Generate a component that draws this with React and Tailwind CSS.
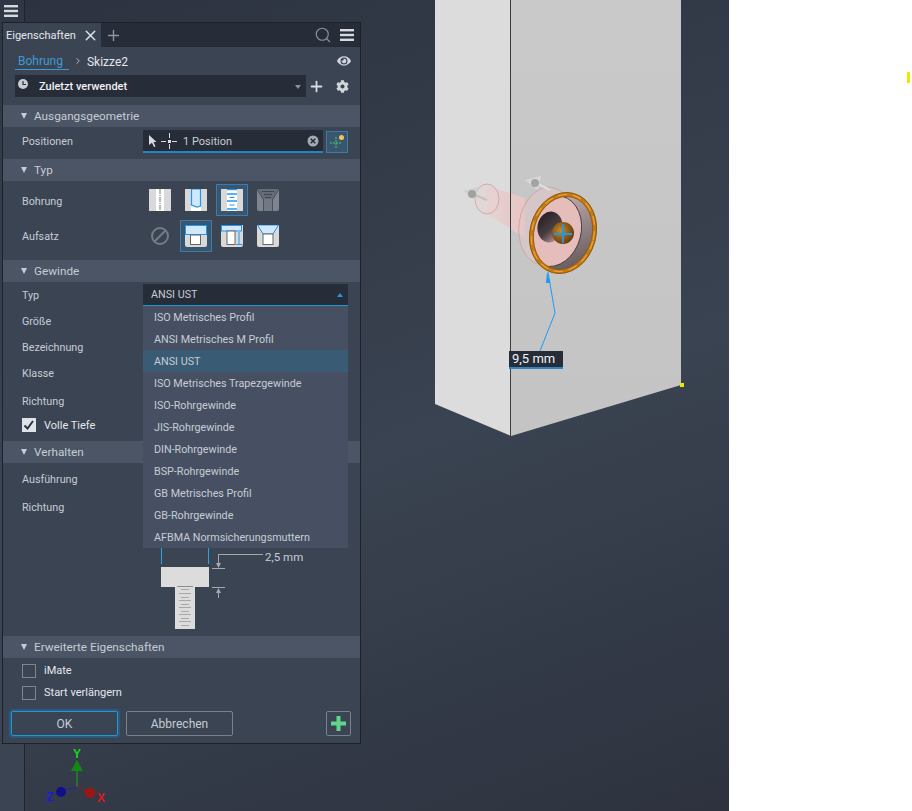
import React from 'react';
import { ChevronRight, Plus, Search, X } from 'lucide-react';
import { FaCog, FaEye } from 'react-icons/fa';

const threads = [
  'ISO Metrisches Profil',
  'ANSI Metrisches M Profil',
  'ANSI UST',
  'ISO Metrisches Trapezgewinde',
  'ISO-Rohrgewinde',
  'JIS-Rohrgewinde',
  'DIN-Rohrgewinde',
  'BSP-Rohrgewinde',
  'GB Metrisches Profil',
  'GB-Rohrgewinde',
  'AFBMA Normsicherungsmuttern',
];

const Hamburger = ({ className }) => (
  <svg viewBox="0 0 14 12" className={className} fill="currentColor">
    <rect x="0" y="0" width="14" height="2.4" />
    <rect x="0" y="4.8" width="14" height="2.4" />
    <rect x="0" y="9.6" width="14" height="2.4" />
  </svg>
);

const SectionHeader = ({ title }) => (
  <div className="h-[22px] shrink-0 bg-[#4b5565] flex items-center pl-[18px] text-[11.75px] text-[#c6ccd5]">
    <span className="w-0 h-0 mr-[7px] border-x-[3.5px] border-x-transparent border-t-[6px] border-t-[#c6ccd5]" />
    <span className="pt-[2px]">{title}</span>
  </div>
);

const Row = ({ label, className, children }) => (
  <div className={`flex items-center shrink-0 pl-[19px] ${className}`}>
    <span className="w-[121px] pt-[2px] text-[#c6ccd5]">{label}</span>
    {children}
  </div>
);

const CheckRow = ({ label, checked, className }) => (
  <div className={`flex items-center shrink-0 pl-[19px] gap-[8px] text-[11px] text-[#e4e7ec] ${className}`}>
    {checked ? (
      <span className="w-[14px] h-[14px] bg-[#dfe3e8] flex items-center justify-center">
        <svg viewBox="0 0 14 14" className="w-[14px] h-[14px]" fill="none" stroke="#2b323e" strokeWidth="2">
          <path d="M2.5 7.5 L5.5 10.5 L11 3" />
        </svg>
      </span>
    ) : (
      <span className="w-[14px] h-[14px] border border-[#7d8693]" />
    )}
    <span className="pt-[2px]">{label}</span>
  </div>
);

const Tile = ({ active, children }) => (
  <div className={`w-[32px] h-[32px] flex items-center justify-center border ${active ? 'bg-[#39566f] border-[#3d7ba5]' : 'border-transparent'}`}>
    <svg viewBox="0 0 22 22" className="w-[22px] h-[22px]">{children}</svg>
  </div>
);

const Sides = ({ width = 6 }) => (
  <>
    <rect x="0" y="0" width="22" height="22" fill="#fff" />
    <rect x="0" y="0" width={width} height="22" fill="#d9d9d9" />
    <rect x={22 - width} y="0" width={width} height="22" fill="#d9d9d9" />
  </>
);

const Block = () => (
  <path d="M0 0 H22 V20 Q22 22 20 22 H2 Q0 22 0 20 Z" fill="#d9d9d9" />
);

const HoleIcons = () => (
  <div className="flex items-center ml-[1px] gap-[4px] -mt-[2px]">
    <Tile>
      <Sides width={7} />
      <path d="M11 0 V22" stroke="#777" strokeWidth="1" strokeDasharray="5 1 1 1" />
    </Tile>
    <Tile>
      <Sides />
      <path d="M6.5 0 V16 L12 18 L15.5 17 V0 Z" fill="#cfe8fb" stroke="#2396ee" strokeWidth="1.2" />
    </Tile>
    <Tile active>
      <Sides />
      <path d="M6 0.7 H16 M6 5 H16 M6 12 H16 M6 20 H16" stroke="#2396ee" strokeWidth="1.3" />
      <path d="M8.5 8.5 H13.5 M8.5 16 H13.5" stroke="#2396ee" strokeWidth="1.2" />
    </Tile>
    <Tile>
      <path d="M0 0 H22 V20 Q22 22 20 22 H2 Q0 22 0 20 Z" fill="#7f858f" />
      <path d="M0 0 H22 L16 10 V22 H6 V10 Z" fill="#656c78" />
      <rect x="7" y="10" width="8" height="12" fill="#727984" />
      <path d="M6.5 10 V22 M15.5 10 V22" stroke="#4a515d" strokeWidth="1" />
      <path d="M0 0 L6 10 M22 0 L16 10" stroke="#4a515d" strokeWidth="1" />
      <path d="M5 2.5 H17 M7 5.5 H15 M8 8.5 H14" stroke="#3f4652" strokeWidth="1" />
    </Tile>
  </div>
);

const SeatIcons = () => (
  <div className="flex items-center ml-[1px] gap-[4px]">
    <div className="w-[32px] h-[32px] flex items-center justify-center">
      <svg viewBox="0 0 20 20" className="w-[20px] h-[20px]" fill="none" stroke="#767c86" strokeWidth="2">
        <circle cx="10" cy="10" r="8" />
        <path d="M4.5 15.5 L15.5 4.5" />
      </svg>
    </div>
    <Tile active>
      <Block />
      <rect x="0.5" y="0.5" width="21" height="9" fill="#cfe8fb" stroke="#2396ee" strokeWidth="1" />
      <rect x="5.5" y="10" width="10" height="9.5" fill="#fff" stroke="#666" strokeWidth="1" />
    </Tile>
    <Tile>
      <Block />
      <rect x="0.5" y="0.5" width="20" height="5.5" fill="#cfe8fb" stroke="#2396ee" strokeWidth="1" />
      <rect x="6" y="6" width="8" height="13.5" fill="#fff" stroke="#666" strokeWidth="1" />
      <path d="M18 7 V19.5 M15 19.5 H21.5" stroke="#2396ee" strokeWidth="1" />
    </Tile>
    <Tile>
      <Block />
      <path d="M0.5 0 L6 9 H16 L21.5 0 Z" fill="#cfe8fb" stroke="#2396ee" strokeWidth="1" />
      <rect x="6" y="9" width="10" height="10.5" fill="#fff" stroke="#666" strokeWidth="1" />
    </Tile>
  </div>
);

const BoltDiagram = () => (
  <svg viewBox="0 0 110 90" className="w-[110px] h-[90px] shrink-0">
    <path d="M6.5 0 V16 M53.5 0 V16" stroke="#29a3e0" strokeWidth="1" />
    <rect x="6" y="19" width="48" height="20" fill="#dcdcdc" />
    <rect x="20" y="38" width="20" height="43" fill="#dcdcdc" />
    <path d="M22 38.5 H38" stroke="#8f8f8f" strokeWidth="1" />
    <path d="M26 41.5 H34 M24 45.5 H36 M26 49.5 H34 M24 52.5 H36 M26 56.5 H34 M24 59.5 H36 M26 63.5 H34 M24 66.5 H36 M26 70.5 H34 M24 73.5 H36 M26 77.5 H34" stroke="#a8a8a8" strokeWidth="1" />
    <path d="M57 20.5 H70 M57 39.5 H70" stroke="#a0a8b4" strokeWidth="1" />
    <path d="M63.5 6 V17 M63.5 6.5 H108 M63.5 43 V50" stroke="#a0a8b4" strokeWidth="1" fill="none" />
    <path d="M61 15 H66 L63.5 20 Z M61 45 H66 L63.5 40 Z" fill="#a0a8b4" />
  </svg>
);

const Panel = () => (
  <div className="absolute left-[2px] top-[22px] w-[359px] h-[722px] border border-[#1c212a] bg-[#3b4453] flex flex-col text-[10.75px]">
    <div className="h-[24px] shrink-0 bg-[#262d38] flex items-center">
      <div className="h-full w-[98px] bg-[#3b4453] flex items-center pl-[3px] text-[11px] text-[#e4e7ec]">
        <span className="pt-[2px]">Eigenschaften</span>
        <X className="w-[17px] h-[17px] ml-[6px] text-[#e0e3e8]" strokeWidth={2} />
      </div>
      <Plus className="w-[17px] h-[17px] ml-[4px] text-[#8f96a1]" strokeWidth={2} />
      <Search className="w-[18px] h-[18px] ml-auto mr-[8px] text-[#8b919b]" strokeWidth={1.5} />
      <Hamburger className="w-[14px] h-[12px] mr-[6px] text-[#d6dae0]" />
    </div>

    <div className="h-[28px] shrink-0 flex items-center pl-[12px] pr-[9px]">
      <span className="pl-[3px] pr-[6px] pt-[1px] text-[12px] text-[#3f9ad3] border-b border-[#3f9ad3] leading-[15px]">Bohrung</span>
      <ChevronRight className="w-[10px] h-[10px] ml-[4px] text-[#c6ccd5]" strokeWidth={2} />
      <span className="ml-[4px] pt-[2px] text-[12px] text-[#e4e7ec]">Skizze2</span>
      <FaEye className="w-[14px] h-[14px] ml-auto text-[#d2d6dc]" />
    </div>

    <div className="h-[22px] shrink-0 flex items-center pl-[12px] pr-[11px]">
      <div className="relative w-[291px] h-full bg-[#262d38] flex items-center pl-[24px] text-[11px] text-[#f0f2f5] font-medium">
        <svg viewBox="0 0 10 10" className="absolute left-[3px] top-[4px] w-[10px] h-[10px]">
          <circle cx="5" cy="5" r="5" fill="#c9cdd3" />
          <path d="M5 2 V5.5 H8" stroke="#262d38" strokeWidth="1.2" fill="none" />
        </svg>
        <span className="pt-[2px]">Zuletzt verwendet</span>
        <span className="absolute right-[5px] top-[10px] w-0 h-0 border-x-[3px] border-x-transparent border-t-[4px] border-t-[#8d939d]" />
      </div>
      <Plus className="w-[17px] h-[17px] ml-[2px] text-[#d8dce2]" strokeWidth={2.5} />
      <FaCog className="w-[13px] h-[13px] ml-auto text-[#d2d6dc]" />
    </div>

    <div className="h-[8px] shrink-0" />
    <SectionHeader title="Ausgangsgeometrie" />
    <Row label="Positionen" className="h-[32px] pb-[4px]">
      <div className="w-[180px] h-[23px] mt-[1px] bg-[#262d38] border-b-2 border-[#1f86c4] flex items-center pl-[6px] text-[11px] text-[#c6ccd5]">
        <svg viewBox="0 0 8 12" className="w-[8px] h-[12px]" fill="#d8dce2">
          <path d="M0 0 L7.5 7 H4.5 L6.5 11.5 L5 12 L3 7.8 L0 10 Z" />
        </svg>
        <svg viewBox="0 0 16 16" className="w-[16px] h-[16px] ml-[4px]" fill="none" stroke="#d8dce2" strokeWidth="1">
          <path d="M0 8.5 H5 M11 8.5 H16 M8.5 0 V5 M8.5 11 V16" />
          <rect x="7" y="7" width="3" height="3" fill="#d8dce2" stroke="none" />
        </svg>
        <span className="ml-[6px] pt-[3px]">1 Position</span>
        <svg viewBox="0 0 12 12" className="w-[12px] h-[12px] ml-auto mr-[4px]">
          <circle cx="6" cy="6" r="5.5" fill="#a4aab3" />
          <path d="M3.7 3.7 L8.3 8.3 M8.3 3.7 L3.7 8.3" stroke="#262d38" strokeWidth="1.5" />
        </svg>
      </div>
      <div className="w-[22px] h-[22px] mt-[1px] ml-[3px] bg-[#39566f] border border-[#3d7ba5] flex items-center justify-center">
        <svg viewBox="0 0 16 16" className="w-[16px] h-[16px]" fill="none">
          <path d="M1 9 H13 M7 3 V15" stroke="#4ec77a" strokeWidth="1" strokeDasharray="2 1" />
          <circle cx="12.5" cy="3.5" r="2.5" fill="#f4c65a" />
        </svg>
      </div>
    </Row>

    <SectionHeader title="Typ" />
    <div className="h-[79px] shrink-0 pt-[3px]">
      <Row label="Bohrung" className="h-[32px] pt-[2px]">
        <HoleIcons />
      </Row>
      <Row label="Aufsatz" className="h-[32px] mt-[4px]">
        <SeatIcons />
      </Row>
    </div>

    <SectionHeader title="Gewinde" />
    <Row label="Typ" className="h-[26px]">
      <div className="relative w-[205px] h-[22px] bg-[#262d38] border-b border-[#1f9ad6] flex items-center pl-[8px] text-[#c6ccd5]">
        <span className="pt-[2px]">ANSI UST</span>
        <span className="absolute right-[5px] top-[9px] w-0 h-0 border-x-[3px] border-x-transparent border-b-[4px] border-b-[#1f9ad6]" />
        <div className="absolute left-0 top-[22px] z-10 w-[205px] bg-[#475062]">
          {threads.map(name => (
            <div key={name} className={`h-[22px] pt-[2px] flex items-center pl-[11px] ${name === 'ANSI UST' ? 'bg-[#395b74]' : ''}`}>
              {name}
            </div>
          ))}
        </div>
      </div>
    </Row>
    <Row label="Größe" className="h-[26px]" />
    <Row label="Bezeichnung" className="h-[26px]" />
    <Row label="Klasse" className="h-[26px]" />
    <Row label="Richtung" className="h-[30px]" />
    <CheckRow label="Volle Tiefe" checked className="h-[18px]" />
    <div className="h-[7px] shrink-0" />

    <SectionHeader title="Verhalten" />
    <Row label="Ausführung" className="h-[32px]" />
    <Row label="Richtung" className="h-[24px]" />

    <div className="h-[117px] shrink-0 flex items-start pl-[152px] pt-[29px] text-[11.5px] text-[#c6ccd5]">
      <BoltDiagram />
      <span className="mt-[2px] leading-[14px]">2,5 mm</span>
    </div>

    <SectionHeader title="Erweiterte Eigenschaften" />
    <CheckRow label="iMate" className="h-[23px] mt-[1px]" />
    <CheckRow label="Start verlängern" className="h-[21px]" />

    <div className="flex items-center mt-[8px] pl-[8px] text-[12px] text-[#c6ccd5]">
      <button className="w-[107px] h-[25px] rounded-[2px] border border-[#1f9ad6] ring-2 ring-[#2b5a7c]">OK</button>
      <button className="w-[107px] h-[25px] ml-[8px] rounded-[2px] border border-[#79818d]">Abbrechen</button>
      <button className="w-[25px] h-[25px] ml-[93px] rounded-[2px] border border-[#79818d] flex items-center justify-center">
        <svg viewBox="0 0 15 15" className="w-[15px] h-[15px]" fill="#5fd68a">
          <path d="M5.5 0 H9.5 V5.5 H15 V9.5 H9.5 V15 H5.5 V9.5 H0 V5.5 H5.5 Z" />
        </svg>
      </button>
    </div>
  </div>
);

const Model = () => (
  <svg viewBox="0 0 729 811" className="absolute inset-0 w-[729px] h-[811px]">
    <defs>
      <linearGradient id="rightFace" x1="0" y1="0" x2="0" y2="1">
        <stop offset="0" stopColor="#c9c9c9" />
        <stop offset="1" stopColor="#c4c4c4" />
      </linearGradient>
      <radialGradient id="ball" cx="0.4" cy="0.4" r="0.7">
        <stop offset="0" stopColor="#c88a28" />
        <stop offset="1" stopColor="#5c3208" />
      </radialGradient>
      <linearGradient id="pit" x1="0" y1="0" x2="1" y2="1">
        <stop offset="0" stopColor="#1f191c" />
        <stop offset="0.55" stopColor="#4a3d40" />
        <stop offset="1" stopColor="#d9b9bb" />
      </linearGradient>
      <linearGradient id="bore" x1="0" y1="0" x2="1" y2="0">
        <stop offset="0" stopColor="#e3d4d4" />
        <stop offset="1" stopColor="#e8c4c4" />
      </linearGradient>
      <linearGradient id="wall" x1="0" y1="0" x2="0.6" y2="1">
        <stop offset="0" stopColor="#d8b8b8" />
        <stop offset="0.6" stopColor="#948487" />
        <stop offset="1" stopColor="#6a5d5f" />
      </linearGradient>
      <clipPath id="mouth">
        <ellipse cx="563" cy="233" rx="31" ry="39" transform="rotate(15 563 233)" />
      </clipPath>
    </defs>
    <polygon points="435,0 511,0 511,436 435,404" fill="#dcdcdc" />
    <polygon points="511,0 681,0 681,385 511,436" fill="url(#rightFace)" />

    <polygon points="487,186 525,198 525,238 487,214" fill="url(#bore)" />
    <ellipse cx="487" cy="199" rx="12" ry="15" fill="#eacfcf" fillOpacity="0.5" stroke="#c9a0a0" strokeWidth="0.8" />
    <ellipse cx="546" cy="226" rx="27" ry="39" transform="rotate(8 546 226)" fill="#e6c8c8" fillOpacity="0.45" stroke="#c9a0a0" strokeWidth="0.8" />
    <path d="M510.5 0 V436" stroke="#3c3c3c" strokeWidth="1" />
    <rect x="680" y="383" width="4" height="4" fill="#f2e500" />

    <ellipse cx="563" cy="233" rx="31" ry="39" transform="rotate(15 563 233)" fill="url(#wall)" />
    <g clipPath="url(#mouth)">
      <ellipse cx="553" cy="231" rx="28" ry="36" transform="rotate(15 553 231)" fill="#e5bdbb" stroke="#333" strokeWidth="0.8" />
    </g>
    <ellipse cx="550" cy="227" rx="12.5" ry="15.5" transform="rotate(10 550 227)" fill="url(#pit)" />
    <circle cx="563" cy="233" r="11" fill="url(#ball)" />
    <path d="M563 224 V243 M554 234 H572" stroke="#1f9aea" strokeWidth="1.8" />
    <ellipse cx="563" cy="233" rx="31" ry="39" transform="rotate(15 563 233)" fill="none" stroke="#c47a12" strokeWidth="4.5" />
    <ellipse cx="563" cy="233" rx="31" ry="39" transform="rotate(15 563 233)" fill="none" stroke="#eaa332" strokeWidth="1.2" strokeDasharray="9 6" />
    <ellipse cx="563" cy="233" rx="33" ry="41" transform="rotate(15 563 233)" fill="none" stroke="#7a4c0c" strokeWidth="0.7" />
    <ellipse cx="563" cy="233" rx="29" ry="37" transform="rotate(15 563 233)" fill="none" stroke="#7a4c0c" strokeWidth="0.6" />

    <polygon points="463,191 478,187 476,201" fill="#d0d0d0" />
    <path d="M475 195 L487 200" stroke="#c2c2c2" strokeWidth="2" />
    <circle cx="472" cy="194" r="4" fill="#a0a0a0" />
    <polygon points="525,180 541,176 538,190" fill="#d8d8d8" />
    <path d="M538 184 L550 190" stroke="#dedede" strokeWidth="2" />
    <circle cx="535" cy="183" r="4" fill="#a4a4a4" />

    <path d="M548 272 L555 313 L540 351" fill="none" stroke="#1e9bf0" strokeWidth="1" />
    <polygon points="547,272 550,283 546,283" fill="#1e9bf0" />

    <path d="M77 787 V765" stroke="#1ea51e" strokeWidth="1" />
    <polygon points="77,760 71,771 83,771" fill="#128a12" />
    <path d="M77 787 L95 791" stroke="#a01414" strokeWidth="1" />
    <path d="M77 787 L60 791" stroke="#2020b0" strokeWidth="1" />
    <circle cx="90" cy="793" r="5" fill="#a01414" />
    <circle cx="61" cy="792" r="5" fill="#10108c" />
    <text x="77" y="758" textAnchor="middle" fontSize="12" fontWeight="700" fill="#1fd11f" fontFamily="Liberation Sans, sans-serif">Y</text>
    <text x="101" y="802" textAnchor="middle" fontSize="12" fontWeight="700" fill="#e01818" fontFamily="Liberation Sans, sans-serif">X</text>
    <text x="50" y="801" textAnchor="middle" fontSize="12" fontWeight="700" fill="#1a1ae0" fontFamily="Liberation Sans, sans-serif">Z</text>
  </svg>
);

export default function App() {
  return (
    <div className="w-[912px] h-[811px] flex overflow-hidden bg-white font-['Roboto',sans-serif]">
      <div className="relative w-[729px] h-full shrink-0 bg-[linear-gradient(160deg,#2c3240_0%,#3a4351_55%,#2d323e_100%)]">
        <div className="absolute left-0 top-0 w-[25px] h-full bg-[linear-gradient(180deg,#2f3644_0%,#3b4453_60%)] border-r border-[#1f242d]" />
        <Hamburger className="absolute left-[4px] top-[5px] w-[14px] h-[12px] text-[#d6dae0]" />
        <Model />
        <Panel />
        <div className="absolute left-[509px] top-[351px] w-[54px] h-[18px] bg-[#262d38] border-b-2 border-[#2f86c4] flex items-center pl-[3px] text-[13px] text-[#f0f2f5]">
          9,5 mm
        </div>
      </div>
      <div className="flex-1 relative">
        <div className="absolute left-[178px] top-[72px] w-[3px] h-[11px] bg-[#f2e500]" />
      </div>
    </div>
  );
}
